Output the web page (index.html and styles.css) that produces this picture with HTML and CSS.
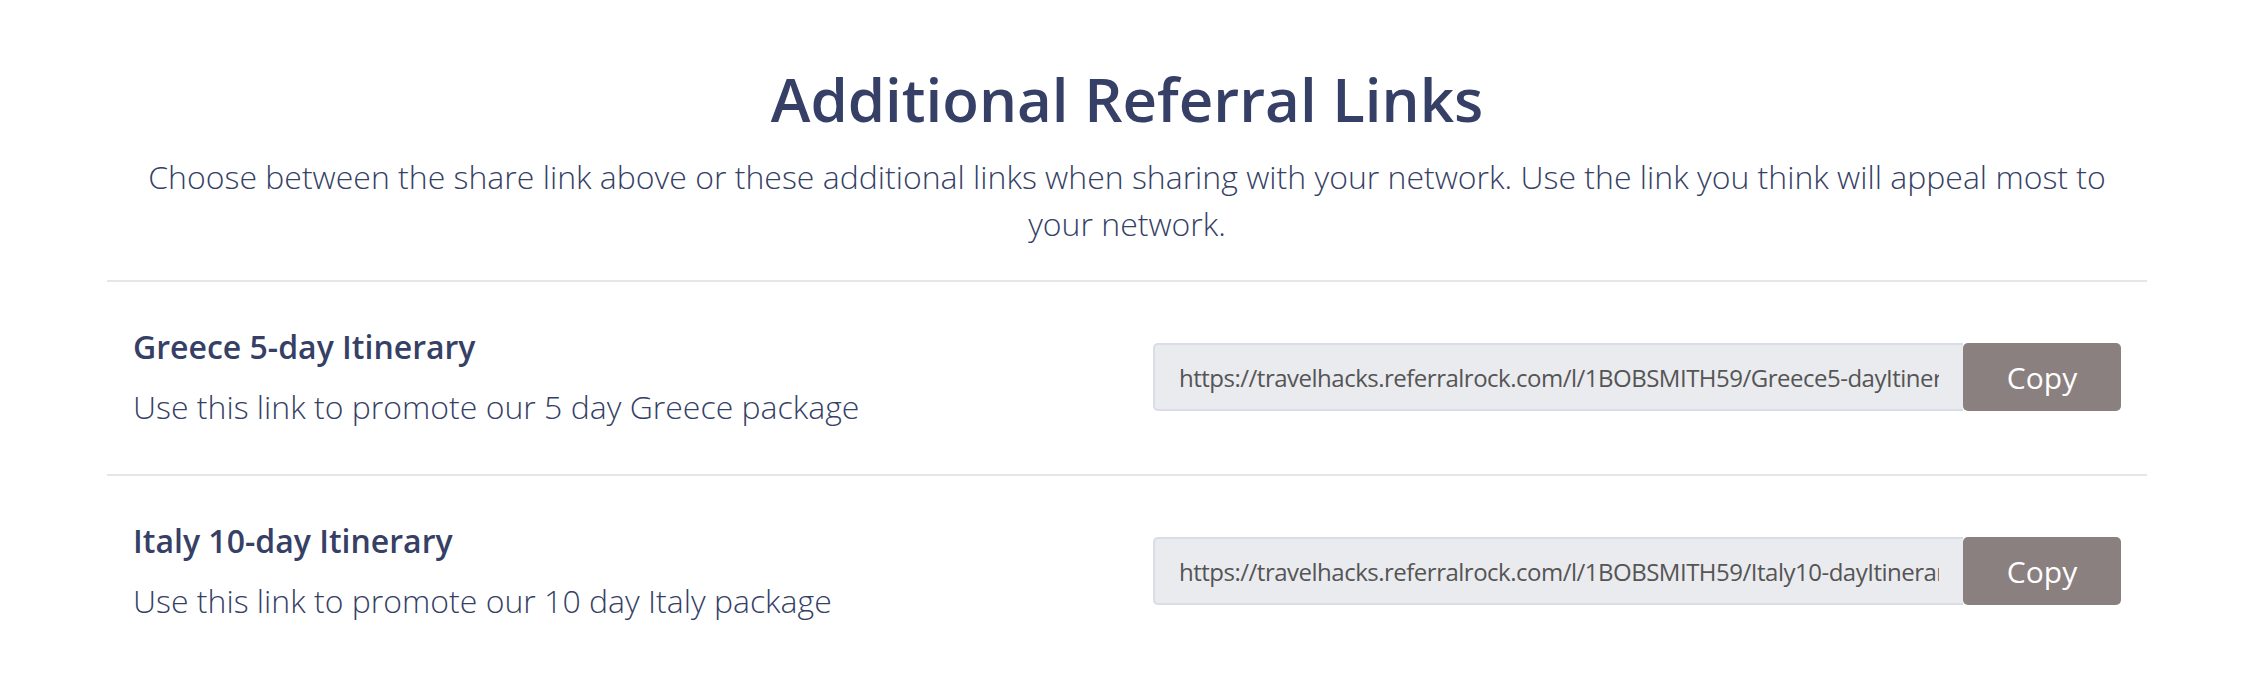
FILE: index.html
```html
<!DOCTYPE html>
<html lang="en">
<head>
    <meta charset="UTF-8">
    <meta name="viewport" content="width=device-width, initial-scale=1.0">
    <title>Additional Referral Links</title>
    <link rel="stylesheet" href="styles.css">
</head>
<body>

<!-- Additional links -->
<div class="links-section">
    <h1>Additional Referral Links</h1>
    <p class="intro">Choose between the share link above or these additional links when sharing with your network. Use the link you think will appeal most to your network.</p>

    <div class="link-row">
        <div class="link-info">
            <div class="link-title">Greece 5-day Itinerary</div>
            <div class="link-desc">Use this link to promote our 5 day Greece package</div>
        </div>
        <div class="copy-group">
            <input type="text" class="link-input" value="https://travelhacks.referralrock.com/l/1BOBSMITH59/Greece5-dayItinerary" readonly>
            <button class="copy-button">Copy</button>
        </div>
    </div>

    <div class="link-row">
        <div class="link-info">
            <div class="link-title">Italy 10-day Itinerary</div>
            <div class="link-desc">Use this link to promote our 10 day Italy package</div>
        </div>
        <div class="copy-group">
            <input type="text" class="link-input" value="https://travelhacks.referralrock.com/l/1BOBSMITH59/Italy10-dayItinerary" readonly>
            <button class="copy-button">Copy</button>
        </div>
    </div>
</div>

</body>
</html>
```

FILE: styles.css
```css
body {
    font-family: 'Open Sans', sans-serif;
    margin: 0;
    padding: 0;
    background-color: #ffffff;
    color: #363f66;
}

.links-section {
    width: 2040px;
    margin: 0 auto;
}

h1 {
    font-size: 60px;
    font-weight: 600;
    line-height: 72px;
    text-align: center;
    margin: 63px 0 18px;
}

.intro {
    font-size: 32px;
    font-weight: 300;
    line-height: 47px;
    text-align: center;
    margin: 0 0 33px;
    padding: 0 30px;
}

.link-row {
    display: flex;
    align-items: center;
    justify-content: space-between;
    border-top: 2px solid #e6e6e6;
    padding: 45px 26px 47px;
}

.link-title {
    font-size: 32px;
    font-weight: 600;
    line-height: 40px;
    margin-bottom: 20px;
}

.link-desc {
    font-size: 32px;
    font-weight: 300;
    line-height: 40px;
}

.copy-group {
    display: flex;
}

.link-input {
    width: 810px;
    height: 68px;
    box-sizing: border-box;
    padding: 0 24px;
    font-family: 'Open Sans', sans-serif;
    font-size: 24px;
    letter-spacing: -0.5px;
    color: #555555;
    background-color: #eaebef;
    border: 2px solid #d8dde8;
    border-right: none;
    border-radius: 5px 0 0 5px;
    outline: none;
}

.copy-button {
    width: 158px;
    height: 68px;
    background-color: #8a807f;
    border: none;
    border-radius: 5px;
    color: #ffffff;
    font-family: 'Open Sans', sans-serif;
    font-size: 30px;
    cursor: pointer;
}
```
